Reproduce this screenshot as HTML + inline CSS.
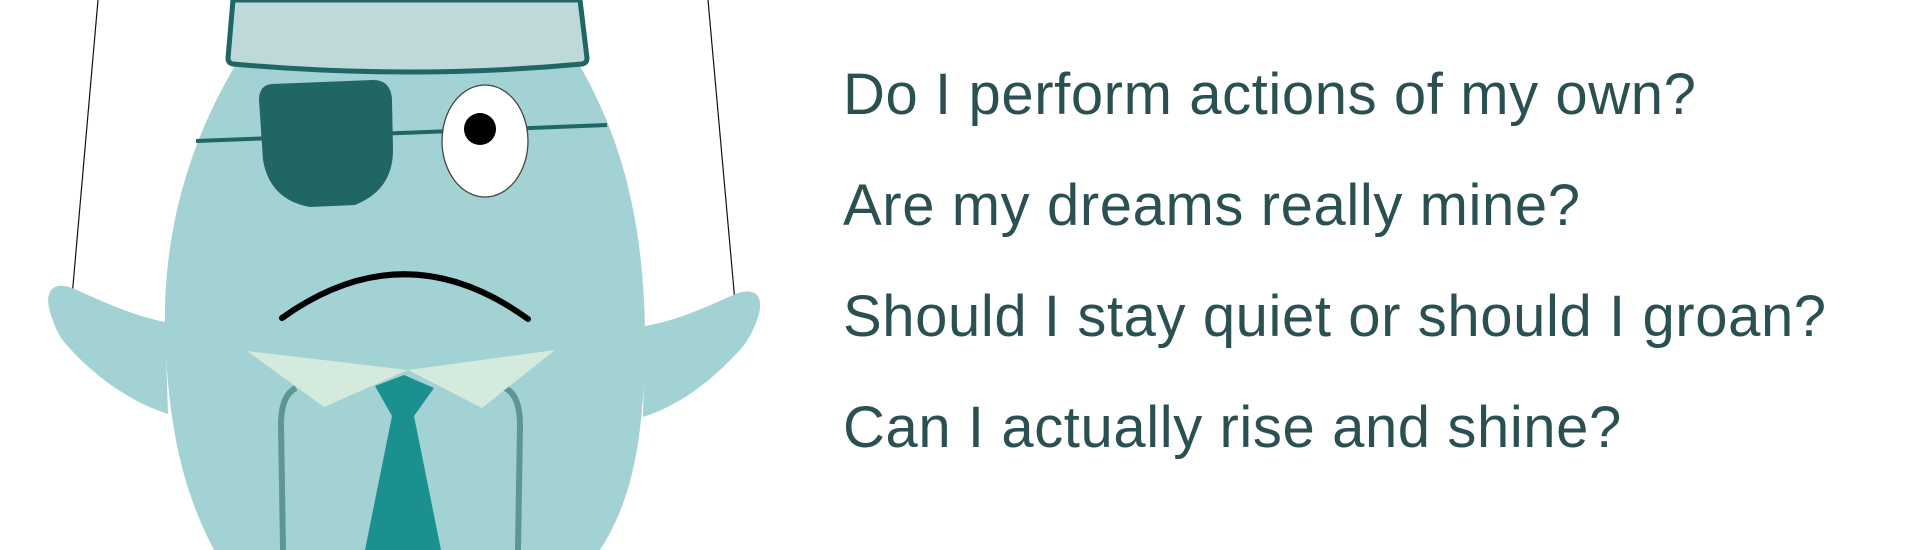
<!DOCTYPE html>
<html><head><meta charset="utf-8"><style>
html,body{margin:0;padding:0;background:#fff;width:1920px;height:550px;overflow:hidden}
svg{position:absolute;left:0;top:0}
.t{position:absolute;left:843px;font-family:"Liberation Sans",sans-serif;font-size:58px;letter-spacing:0.6px;color:#2a5052;white-space:nowrap;line-height:1}
</style></head><body>
<svg width="800" height="550" viewBox="0 0 800 550">
<line x1="98" y1="0" x2="72" y2="297" stroke="#111" stroke-width="1.2"/>
<line x1="708" y1="0" x2="735" y2="302" stroke="#111" stroke-width="1.2"/>
<path d="M165 322 C130 315 100 300 72 288 C50 280 45 295 50 312 C54 325 58 334 64 342 C90 372 125 400 168 414 Z" fill="#a2d2d4"/>
<path d="M645 326 C680 320 710 305 738 293 C760 286 764 302 757 320 C752 334 746 344 738 352 C710 382 680 405 643 417 Z" fill="#a2d2d4"/>
<path d="M214 550 C188 500 168 440 165 330 C163 240 185 150 235 66 L580 66 C622 140 643 220 645 330 C645 440 632 500 600 550 Z" fill="#a2d2d4"/>
<path d="M233 0 L228 58 Q228 63 233 64 Q410 80 582 64 Q587 63 587 58 L580 0 Z" fill="#bfd9da" stroke="#1f6664" stroke-width="5"/>
<line x1="196" y1="141" x2="607" y2="125" stroke="#206664" stroke-width="4"/>
<path d="M272 84 L373 80 Q391 80 392 100 L393 150 Q393 190 355 205 L310 207 Q270 200 263 160 L259 100 Q259 85 272 84 Z" fill="#206664"/>
<ellipse cx="485" cy="141" rx="43" ry="56" fill="#fff" stroke="#444" stroke-width="1.3"/>
<ellipse cx="480" cy="129" rx="16" ry="16" fill="#000"/>
<path d="M282 318 Q405 230 528 319" fill="none" stroke="#000" stroke-width="6" stroke-linecap="round"/>
<path d="M296 388 Q281 395 281 425 L283 550" fill="none" stroke="#5e9694" stroke-width="6"/>
<path d="M505 388 Q520 395 520 425 L518 550" fill="none" stroke="#5e9694" stroke-width="6"/>
<path d="M247 351 L408 370 L324 407 Z" fill="#d4eadd"/>
<path d="M555 350 L408 370 L482 408 Z" fill="#d4eadd"/>
<path d="M375 386 L404 375 L434 388 L414 416 L441 550 L365 550 L392 416 Z" fill="#1a9090"/>
</svg>
<div class="t" style="top:66px">Do I perform actions of my own?</div>
<div class="t" style="top:177px">Are my dreams really mine?</div>
<div class="t" style="top:288px">Should I stay quiet or should I groan?</div>
<div class="t" style="top:399px">Can I actually rise and shine?</div>
</body></html>
